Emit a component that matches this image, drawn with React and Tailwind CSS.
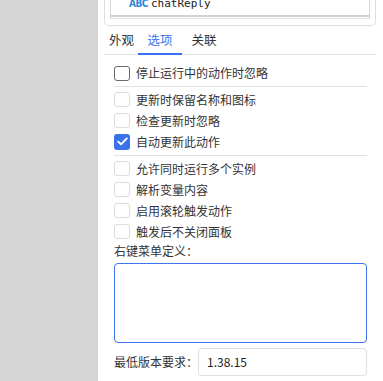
import React from "react";

const font = { fontFamily: '"Noto Sans CJK SC", "Noto Sans", sans-serif' };

function Box({ checked, strong }) {
  if (checked) {
    return (
      <div className="w-[16px] h-[16px] rounded-[3px] bg-[#3a72ea] flex items-center justify-center shrink-0">
        <svg width="11" height="9" viewBox="0 0 11 9" fill="none">
          <path d="M1.2 4.6 L4 7.3 L9.8 1.4" stroke="white" strokeWidth="1.9" strokeLinecap="round" strokeLinejoin="round" />
        </svg>
      </div>
    );
  }
  return (
    <div
      className={
        "w-[16px] h-[15px] rounded-[3px] shrink-0 bg-white border " +
        (strong ? "border-[#6b6b6b]" : "border-[#dcdcdc]")
      }
    />
  );
}

function Row({ label, checked, strong }) {
  return (
    <div className="flex items-center h-[21px] gap-[6px]">
      <Box checked={checked} strong={strong} />
      <span className="text-[12px] leading-[16px] text-[#333] whitespace-nowrap">{label}</span>
    </div>
  );
}

export default function App() {
  return (
    <div className="flex w-[383px] h-[381px] overflow-hidden bg-white" style={font}>
      <div className="w-[98px] h-full bg-[#d5d5d5] shrink-0" />
      <div className="flex-1 flex flex-col bg-white">
        {/* top list box */}
        <div className="ml-[6px] mr-[7px] border border-t-0 border-[#dedede] rounded-b-[5px] px-[5px] pb-[6px]">
          <div className="border-x border-[#d6d6d6]">
            <div className="flex items-center h-[13px] mt-[-3px] pl-[18px] gap-[3px]">
              <span className="text-[10px] font-bold text-[#2a8ad8] leading-[13px] tracking-[-0.5px]" style={{ fontFamily: '"DejaVu Sans Condensed", "DejaVu Sans", sans-serif' }}>ABC</span>
              <span className="text-[11px] leading-[13px] text-[#222]" style={{ fontFamily: '"DejaVu Sans Mono", monospace' }}>chatReply</span>
            </div>
            <div className="h-[5px]" />
            <div className="h-[2px] bg-[#d2d2d2]" />
            <div className="h-[1px] bg-white" />
            <div className="h-[1px] bg-[#e2e2e2]" />
          </div>
        </div>

        {/* tabs */}
        <div className="ml-[6px] mr-[7px] border-b border-[#e4e4e4] flex items-end h-[29px]">
          <div className="pl-[5px] w-[34px] h-full flex items-center text-[12.5px] text-[#333] whitespace-nowrap">外观</div>
          <div className="w-[44px] h-full flex items-center justify-center text-[12.5px] text-[#3b74ec] border-b-[2px] border-[#3a6ff0] mb-[-1px] whitespace-nowrap">选项</div>
          <div className="w-[44px] h-full flex items-center justify-center text-[12.5px] text-[#333] whitespace-nowrap">关联</div>
        </div>

        {/* options */}
        <div className="pl-[16px] pr-[16px] flex flex-col">
          <div className="flex items-center h-[26px] gap-[6px] mt-[5px]">
            <Box strong />
            <span className="text-[12px] leading-[16px] text-[#333] whitespace-nowrap">停止运行中的动作时忽略</span>
          </div>
          <div className="h-[1px] bg-[#e2e2e2]" />
          <div className="pt-[2px] pb-[3px]">
            <Row label="更新时保留名称和图标" />
            <Row label="检查更新时忽略" />
            <Row label="自动更新此动作" checked />
          </div>
          <div className="h-[1px] bg-[#e2e2e2]" />
          <div className="pt-[2px]">
            <Row label="允许同时运行多个实例" />
            <Row label="解析变量内容" />
            <Row label="启用滚轮触发动作" />
            <Row label="触发后不关闭面板" />
          </div>
          <div className="text-[12px] leading-[16px] text-[#333] mt-[1px] whitespace-nowrap">右键菜单定义：</div>
          <div className="mt-[4px] h-[80px] border border-[#3d74ee] rounded-[4px] bg-white" />
          <div className="flex items-center mt-[5px] gap-[4px]">
            <span className="text-[12px] leading-[16px] text-[#333] w-[80px] whitespace-nowrap">最低版本要求：</span>
            <div className="flex-1 h-[28px] border border-[#e0e0e0] rounded-[4px] flex items-center pl-[8px] text-[12px] text-[#222]">1.38.15</div>
          </div>
        </div>
      </div>
    </div>
  );
}
